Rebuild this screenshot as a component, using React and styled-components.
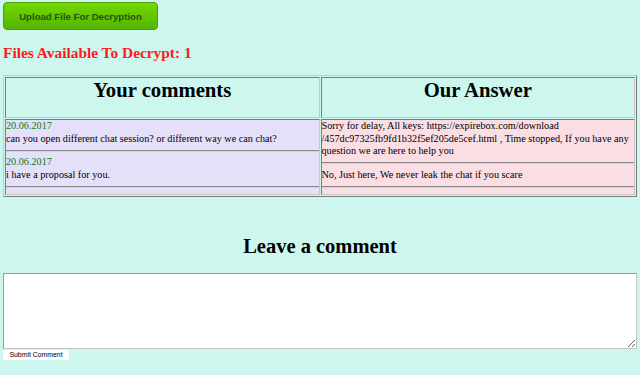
import React from 'react'
import styled, { createGlobalStyle } from 'styled-components'

const GlobalStyle = createGlobalStyle`
    html, body {
        margin: 0;
        background: #cdf7ee;
    }
    body {
        padding: 2px 3px;
        font-family: "Liberation Serif", "Times New Roman", serif;
        color: #000;
    }
`;

const UploadButton = styled.button`
    display: block;
    width: 155px;
    height: 28px;
    margin: 0;
    padding: 0;
    border: 1px solid #4fa000;
    border-radius: 4px;
    background: linear-gradient(to bottom, #74d800, #52b400);
    color: #2a5210;
    font-family: "Liberation Sans", Arial, sans-serif;
    font-size: 9.6px;
    font-weight: bold;
    cursor: pointer;
`;

const Counter = styled.h3`
    margin: 14px 0 0;
    color: #ff1a1a;
    font-size: 15.4px;
    line-height: 18px;
    font-weight: bold;
`;

const Table = styled.table`
    width: 100%;
    margin-top: 13px;
    border: 1px solid;
    border-color: #c8c8c8 #7c7c7c #7c7c7c #c8c8c8;
    border-spacing: 1px;
    table-layout: fixed;
`;

const HeadCell = styled.th`
    border: 1px solid;
    border-color: #7c7c7c #c8c8c8 #c8c8c8 #7c7c7c;
    padding: 0;
    vertical-align: top;
`;

const Heading = styled.h1`
    margin: 0 0 15px;
    font-size: 20.7px;
    line-height: 24px;
    font-weight: bold;
`;

const Cell = styled.td`
    border: 1px solid;
    border-color: #7c7c7c #c8c8c8 #c8c8c8 #7c7c7c;
    padding: 0 0 2px;
    vertical-align: top;
    background: ${props => props.tone === 'pink' ? '#fbdee3' : '#e5e0fa'};
    font-size: 10.2px;
    line-height: 12.5px;
`;

const Entry = styled.div`
    padding: 0;
`;

const Date = styled.div`
    color: #0b7a0b;
`;

const Rule = styled.hr`
    margin: 4.5px 0;
    border: 0;
    border-top: 1px solid #888;
    border-bottom: 1px solid #d4d4d4;
`;

const Title = styled.h2`
    margin: 37px 0 0;
    text-align: center;
    font-size: 20.5px;
    line-height: 24px;
    font-weight: bold;
`;

const CommentBox = styled.textarea`
    display: block;
    box-sizing: border-box;
    width: 100%;
    height: 76px;
    margin: 15px 0 0;
    border: 1px solid;
    border-color: #9a9a9a #c4c4c4 #c4c4c4 #9a9a9a;
    background: #fff;
    resize: both;
`;

const SubmitButton = styled.button`
    display: block;
    width: 66px;
    height: 10px;
    margin: 1px 0 0;
    padding: 0;
    border: 0;
    border-radius: 2px;
    background: #fff;
    font-family: "Liberation Sans", Arial, sans-serif;
    font-size: 6.9px;
    line-height: 10px;
    color: #000;
`;

const comments = [
    { date: '20.06.2017', text: 'can you open different chat session? or different way we can chat?' },
    { date: '20.06.2017', text: 'i have a proposal for you.' },
];

const answers = [
    'Sorry for delay, All keys: https://expirebox.com/download /457dc97325fb9fd1b32f5ef205de5cef.html , Time stopped, If you have any question we are here to help you',
    'No, Just here, We never leak the chat if you scare',
];

export default function App() {
    return (
        <>
            <GlobalStyle />
            <UploadButton>Upload File For Decryption</UploadButton>
            <Counter>Files Available To Decrypt: 1</Counter>
            <Table>
                <thead>
                    <tr>
                        <HeadCell><Heading>Your comments</Heading></HeadCell>
                        <HeadCell><Heading>Our Answer</Heading></HeadCell>
                    </tr>
                </thead>
                <tbody>
                    <tr>
                        <Cell>
                            {comments.map((c, i) => (
                                <Entry key={i}>
                                    <Date>{c.date}</Date>
                                    {c.text}
                                    <Rule />
                                </Entry>
                            ))}
                        </Cell>
                        <Cell tone='pink'>
                            {answers.map((a, i) => (
                                <Entry key={i}>
                                    {a}
                                    <Rule />
                                </Entry>
                            ))}
                        </Cell>
                    </tr>
                </tbody>
            </Table>
            <Title>Leave a comment</Title>
            <CommentBox />
            <SubmitButton>Submit Comment</SubmitButton>
        </>
    )
}
